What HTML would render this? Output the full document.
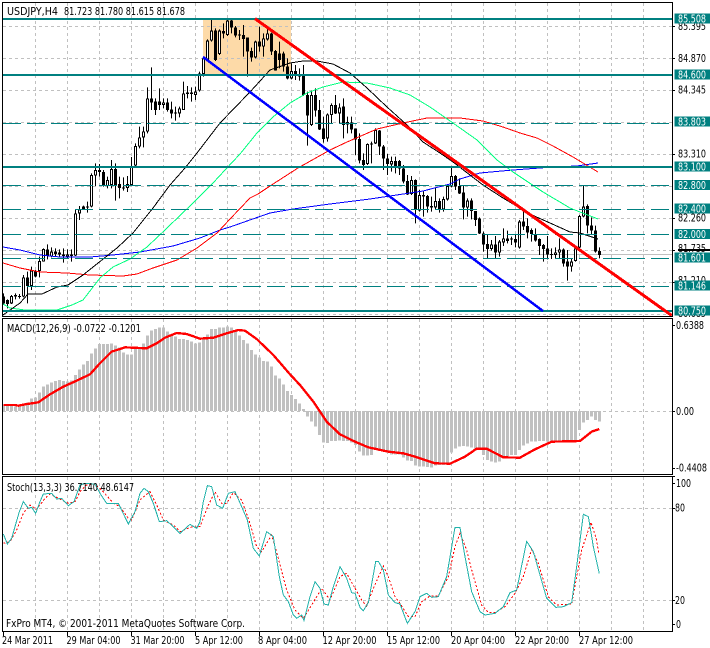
<!DOCTYPE html>
<html><head><meta charset="utf-8"><title>USDJPY,H4</title>
<style>html,body{margin:0;padding:0;background:#fff;width:710px;height:648px;overflow:hidden}svg{display:block}text{font-family:"DejaVu Sans","Liberation Sans",sans-serif;font-size:10.5px;fill:#000}.w{fill:#fff}polyline,line{shape-rendering:crispEdges}</style></head>
<body>
<svg width="710" height="648" viewBox="0 0 710 648" xmlns="http://www.w3.org/2000/svg">
<rect width="710" height="648" fill="#fff"/>
<!-- rectangle -->
<rect x="203" y="20" width="88" height="54" fill="#fddaa8"/>
<!-- grid -->
<g stroke="#c0c0c0" stroke-width="1" stroke-dasharray="3 3" fill="none" shape-rendering="crispEdges">
<path d="M3 26.5H672M3 58.5H672M3 90.5H672M3 122.5H672M3 154.5H672M3 186.5H672M3 218.5H672M3 250.5H672M3 282.5H672M3 314.5H672"/>
<path d="M35.5 3V316M67.5 3V316M99.5 3V316M131.5 3V316M163.5 3V316M195.5 3V316M227.5 3V316M259.5 3V316M291.5 3V316M323.5 3V316M355.5 3V316M387.5 3V316M419.5 3V316M451.5 3V316M483.5 3V316M515.5 3V316M547.5 3V316M579.5 3V316M611.5 3V316M643.5 3V316"/>
<path d="M35.5 319V474M67.5 319V474M99.5 319V474M131.5 319V474M163.5 319V474M195.5 319V474M227.5 319V474M259.5 319V474M291.5 319V474M323.5 319V474M355.5 319V474M387.5 319V474M419.5 319V474M451.5 319V474M483.5 319V474M515.5 319V474M547.5 319V474M579.5 319V474M611.5 319V474M643.5 319V474"/>
<path d="M3 411.5H672"/>
<path d="M35.5 477V631M67.5 477V631M99.5 477V631M131.5 477V631M163.5 477V631M195.5 477V631M227.5 477V631M259.5 477V631M291.5 477V631M323.5 477V631M355.5 477V631M387.5 477V631M419.5 477V631M451.5 477V631M483.5 477V631M515.5 477V631M547.5 477V631M579.5 477V631M611.5 477V631M643.5 477V631"/>
<path d="M3 508.5H672M3 600.5H672"/>
</g>
<!-- current price line -->
<path d="M3 254.5H672" stroke="#c0c0c0" stroke-width="1" shape-rendering="crispEdges"/>
<!-- candles -->
<g fill="none" shape-rendering="crispEdges">
<g transform="translate(0,160) scale(1,.33333)">
<path stroke="#000" stroke-width="1" d="M3.5 400V435M7.5 418V445M11.5 405V432M15.5 400V418M19.5 402V416M23.5 345V412M27.5 335V430M31.5 320V390M35.5 330V352M39.5 290V352M43.5 265V305M47.5 253V298M51.5 262V292M55.5 265V290M59.5 268V292M63.5 265V308M67.5 268V297M71.5 268V305M75.5 150V288M79.5 138V180M83.5 137V150M87.5 125V158M91.5 40V142M95.5 10V78M99.5 12V50M103.5 30V80M107.5 50V85M111.5 0V85M115.5 10V122M119.5 50V115M123.5 52V92M127.5 48V96M131.5 -9V75"/>
<path stroke="#000" stroke-width="3" d="M3.5 410V430M7.5 420V432M11.5 408V430M15.5 405V410M19.5 408V411M23.5 352V410M27.5 352V378M31.5 332V378M35.5 335V350M39.5 303V333M43.5 267V305M47.5 268V287M51.5 275V290M55.5 275V282M59.5 277V283M63.5 283V288M67.5 283V290M71.5 283V288M75.5 160V287M79.5 148V160M83.5 140V148M87.5 140V143M91.5 45V140M95.5 30V47M99.5 30V36M103.5 36V75M107.5 60V78M111.5 27V75M115.5 27V75M119.5 72V84M123.5 82V85M127.5 72V84M131.5 20V75"/>
<path stroke="#fff" stroke-width="1" d="M11.5 411V427M23.5 355V407M31.5 335V375M39.5 306V330M43.5 270V302M51.5 278V287M67.5 286V287M75.5 163V284M79.5 151V157M91.5 48V137M95.5 33V44M107.5 63V75M111.5 30V72M127.5 75V81M131.5 23V72"/>
</g>
<g>
<g transform="scale(1,.33333)">
<path stroke="#000" stroke-width="1" d="M135.5 430V500M139.5 380V445M143.5 380V442M147.5 262V400M151.5 202V330M155.5 295V345M159.5 265V330M163.5 295V325M167.5 295V335M171.5 305V355M175.5 320V362M179.5 320V352M183.5 245V330M187.5 258V295M191.5 262V305M195.5 260V300M199.5 215V275M203.5 170V230M207.5 118V180M211.5 55V125M215.5 85V183M219.5 88V165M223.5 70V115M227.5 55V108M231.5 55V100M235.5 78V112M239.5 90V120M243.5 75V170M247.5 113V230M251.5 143V185M255.5 122V175M259.5 80V155M263.5 100V170M267.5 80V122M271.5 98V165M275.5 150V212M279.5 125V205M283.5 155V215M287.5 175V238M291.5 190V238M295.5 195V240M299.5 205V242M303.5 195V288M307.5 275V437M311.5 272V378M315.5 265V350M319.5 300V390M323.5 350V428M327.5 340V425M331.5 310V370M335.5 285V342M339.5 310V372M343.5 295V415M347.5 350V400M351.5 350V400M355.5 385V465M359.5 400V490M363.5 460V510M367.5 430V495M371.5 425V490M375.5 385V432M379.5 390V465M383.5 435V510M387.5 462V525"/>
<path stroke="#000" stroke-width="3" d="M135.5 438V497M139.5 412V440M143.5 394V412M147.5 295V395M151.5 295V308M155.5 305V330M159.5 305V315M163.5 307V315M167.5 307V330M171.5 328V340M175.5 337V340M179.5 325V340M183.5 280V330M187.5 278V282M191.5 278V282M195.5 275V285M199.5 220V272M203.5 175V222M207.5 122V178M211.5 92V122M215.5 92V180M219.5 92V162M223.5 93V100M227.5 62V105M231.5 62V82M235.5 82V107M239.5 103V106M243.5 105V117M247.5 113V155M251.5 153V172M255.5 125V172M259.5 125V140M263.5 115V140M267.5 100V118M271.5 100V155M275.5 153V212M279.5 160V180M283.5 160V200M287.5 200V236M291.5 213V235M295.5 213V228M299.5 222V230M303.5 226V285M307.5 285V347M311.5 285V375M315.5 285V332M319.5 330V388M323.5 385V417M327.5 343V415M331.5 315V345M335.5 315V340M339.5 322V340M343.5 320V375M347.5 366V373M351.5 367V388M355.5 385V418M359.5 417V482M363.5 480V495M367.5 432V492M371.5 430V433M375.5 390V430M379.5 392V440M383.5 440V475M387.5 475V492"/>
<path stroke="#fff" stroke-width="1" d="M135.5 441V494M139.5 415V437M143.5 397V409M147.5 298V392M163.5 310V312M179.5 328V337M183.5 283V327M195.5 278V282M199.5 223V269M203.5 178V219M207.5 125V175M211.5 95V119M219.5 95V159M227.5 65V102M255.5 128V169M263.5 118V137M267.5 103V115M291.5 216V232M311.5 288V372M327.5 346V412M331.5 318V342M339.5 325V337M347.5 369V370M367.5 435V489M375.5 393V427"/>
</g>
</g>
<g transform="translate(0,100) scale(1,.33333)">
<path stroke="#000" stroke-width="1" d="M391.5 170V215M395.5 170V220M399.5 180V225M403.5 195V250M407.5 225V285M411.5 228V285M415.5 238V370M419.5 270V335M423.5 272V350M427.5 285V338M431.5 290V335M435.5 262V330M439.5 295V338M443.5 290V335M447.5 255V302M451.5 200V262M455.5 225V270M459.5 235V282"/>
<path stroke="#000" stroke-width="3" d="M391.5 183V193M395.5 183V200M399.5 183V205M403.5 205V245M407.5 243V283M411.5 240V282M415.5 240V330M419.5 285V332M423.5 285V290M427.5 288V320M431.5 318V322M435.5 303V322M439.5 303V328M443.5 297V328M447.5 258V298M451.5 228V260M455.5 228V260M459.5 258V280"/>
<path stroke="#fff" stroke-width="1" d="M391.5 186V190M411.5 243V279M419.5 288V329M435.5 306V319M443.5 300V325M447.5 261V295M451.5 231V257"/>
</g>
<g transform="translate(0,160) scale(1,.33333)">
<path stroke="#000" stroke-width="1" d="M463.5 75V178M467.5 115V170M471.5 115V178M475.5 153V198M479.5 172V222M483.5 215V275M487.5 225V295M491.5 240V272M495.5 228V295M499.5 240V290M503.5 205V258M507.5 212V250M511.5 230V255M515.5 225V262M519.5 180V266M523.5 145V210M527.5 175V235M531.5 205V245M535.5 205V245M539.5 235V285M543.5 252V305M547.5 228V298M551.5 265V297M555.5 262V295M559.5 235V295M563.5 265V320M567.5 270V362M571.5 295V335M575.5 258V305M579.5 165V265M583.5 75V172M587.5 133V220M591.5 172V222M595.5 197V278M599.5 262V295"/>
<path stroke="#000" stroke-width="3" d="M463.5 97V142M467.5 122V143M471.5 122V153M475.5 153V180M479.5 175V220M483.5 220V253M487.5 252V267M491.5 253V267M495.5 253V278M499.5 245V278M503.5 235V247M507.5 235V243M511.5 235V238M515.5 237V248M519.5 185V263M523.5 185V200M527.5 198V218M531.5 210V222M535.5 222V242M539.5 237V258M543.5 255V267M547.5 265V283M551.5 282V285M555.5 277V285M559.5 268V278M563.5 268V310M567.5 305V320M571.5 305V320M575.5 265V303M579.5 168V263M583.5 140V170M587.5 138V197M591.5 197V212M595.5 212V275M599.5 273V285"/>
<path stroke="#fff" stroke-width="1" d="M467.5 125V140M491.5 256V264M499.5 248V275M503.5 238V244M519.5 188V260M555.5 280V282M559.5 271V275M571.5 308V317M575.5 268V300M579.5 171V260M583.5 143V167"/>
</g>
</g>
<!-- moving averages -->
<g fill="none" stroke-width="1">
<polyline stroke="#0000ff" points="3,247 20,250 40,255 60,257 90,257 113,255 140,252 173,246 200,238 220,230 230,227 247,221 270,213 293,209 330,204 370,199 390,196 423,191 450,184 460,179 480,173 513,170 553,167 577,166 598,163"/>
<polyline stroke="#ff0000" points="3,263 20,268 40,272 67,273 90,275 123,276 137,274 153,268 177,260 197,248 217,233 230,219 250,198 258,194 270,186 298,168 330,150 347,142 377,129 403,123 427,118 460,118 483,121 503,127 520,133 537,138 553,146 573,157 598,172"/>
<polyline stroke="#00ff7f" points="3,304 10,308 25,310 57,310 72,305 83,300 100,278 113,267 130,259 147,247 167,228 193,203 213,183 225,170 240,154 257,133 273,117 290,103 307,93 323,87 343,82 367,83 390,88 410,95 430,107 453,123 477,140 497,160 513,172 543,192 570,208 580,212 598,219"/>
<polyline stroke="#000" points="3,315 20,303 28,294 42,294 57,287 68,285 83,275 117,248 133,233 153,208 170,185 185,168 197,153 220,123 250,92 270,70 290,63 303,61 317,61 333,64 350,73 367,88 387,107 407,125 423,142 440,153 453,162 483,185 503,198 523,210 532,215 550,223 570,232 580,233 598,239"/>
</g>
<!-- horizontal objects -->
<g stroke="#008080" fill="none" shape-rendering="crispEdges">
<path stroke-width="2" d="M3 19H672M3 75H672M3 167H672M3 311H672"/>
<path stroke-width="1" stroke-dasharray="18 6" d="M3 123.5H672M3 185.5H672M3 209.5H672M3 234.5H672M3 258.5H672M3 286.5H672"/>
</g>
<!-- trend lines -->
<line x1="203" y1="57" x2="543" y2="311" stroke="#0000ff" stroke-width="2.5"/>
<line x1="255" y1="18.7" x2="671.7" y2="315.5" stroke="#ff0000" stroke-width="3"/>
<!-- MACD bars -->
<g transform="translate(0,315) scale(1,.33333)" fill="none" stroke="#c0c0c0" stroke-width="3" shape-rendering="crispEdges">
<path d="M3.5 272V288M7.5 272V288M11.5 272V288M15.5 275V288M19.5 272V288M23.5 270V288M27.5 262V288M31.5 250V288M35.5 248V288M39.5 232V288M43.5 215V288M47.5 208V288M51.5 203V288M55.5 198V288M59.5 195V288M63.5 198V288M67.5 200V288M71.5 197V288M75.5 180V288M79.5 163V288M83.5 148V288M87.5 138V288M91.5 115V288M95.5 100V288M99.5 87V288M103.5 87V288M107.5 87V288M111.5 85V288M115.5 92V288M119.5 98V288M123.5 112V288M127.5 118V288M131.5 118V288M135.5 100V288M139.5 100V288M143.5 85V288M147.5 62V288M151.5 47V288M155.5 42V288M159.5 38V288M163.5 38V288M167.5 50V288M171.5 60V288M175.5 65V288M179.5 72V288M183.5 72V288M187.5 75V288M191.5 80V288M195.5 85V288M199.5 82V288M203.5 72V288M207.5 58V288M211.5 42V288M215.5 42V288M219.5 38V288M223.5 38V288M227.5 35V288M231.5 38V288M235.5 50V288M239.5 62V288M243.5 75V288M247.5 85V288M251.5 105V288M255.5 118V288M259.5 128V288M263.5 138V288M267.5 140V288M271.5 155V288M275.5 182V288M279.5 190V288M283.5 208V288M287.5 228V288M291.5 240V288M295.5 252V288M299.5 265V288M303.5 282V288"/>
<path d="M307.5 288V305M311.5 288V320M315.5 288V335M319.5 288V360M323.5 288V382M327.5 288V384M331.5 288V378M335.5 288V378M339.5 288V376M343.5 288V378M347.5 288V378M351.5 288V382M355.5 288V390M359.5 288V410M363.5 288V422M367.5 288V422M371.5 288V420M375.5 288V405M379.5 288V408M383.5 288V408M387.5 288V412M391.5 288V418M395.5 288V418M399.5 288V418M403.5 288V428M407.5 288V436M411.5 288V438M415.5 288V452M419.5 288V454M423.5 288V454M427.5 288V456M431.5 288V458M435.5 288V452M439.5 288V450M443.5 288V450M447.5 288V445M451.5 288V412M455.5 288V400M459.5 288V395M463.5 288V393M467.5 288V395M471.5 288V398M475.5 288V400M479.5 288V400M483.5 288V420M487.5 288V435M491.5 288V440M495.5 288V442M499.5 288V440M503.5 288V430M507.5 288V425M511.5 288V420M515.5 288V420M519.5 288V405M523.5 288V392M527.5 288V385M531.5 288V380M535.5 288V380M539.5 288V378M543.5 288V378M547.5 288V380M551.5 288V378M555.5 288V376M559.5 288V376M563.5 288V378M567.5 288V380M571.5 288V382M575.5 288V380M579.5 288V345M583.5 288V322M587.5 288V315M591.5 288V305M595.5 288V315M599.5 288V320"/>
</g>
<!-- MACD signal -->
<g fill="none" stroke="#ff0000" stroke-width="7" stroke-linejoin="round">
<polyline transform="translate(0,315) scale(.33333)" points="10,270 45,270 55,272 75,268 115,262 150,238 190,215 230,197 270,178 295,150 335,110 375,97 440,100 470,85 495,68 530,54 560,57 600,71 640,68 680,55 715,45 735,47 770,72 820,120 870,178 900,210 940,260 980,320 1020,358 1065,380"/>
<polyline transform="translate(355,315) scale(.33333)" points="0,380 40,397 100,410 145,415 180,425 240,445 285,446 330,425 365,401 395,401 445,427 495,428 540,403 590,380 675,378 710,350 733,342"/>
</g>
<!-- Stochastic -->
<g fill="none" stroke="#ff0000" stroke-width="3" stroke-dasharray="6 6">
<polyline transform="translate(0,470) scale(.33333)" points="10,220 30,215 50,180 70,130 90,105 110,118 135,85 150,72 175,85 205,100 225,95 240,65 260,45 285,42 310,65 340,100 360,110 385,145 395,150 420,90 450,65 470,105 490,150 520,165 540,185 570,172 600,170 625,105 645,65 665,100 680,100 700,68 725,90 750,160 770,230 785,245 815,195 835,265 860,360 885,420 910,445 935,405 965,355 990,390 1020,320 1040,310 1065,355"/>
<polyline transform="translate(355,470) scale(.33333)" points="0,355 20,390 35,408 55,355 85,288 100,320 120,380 135,400 160,440 180,440 200,395 225,378 250,378 280,320 300,230 315,190 335,240 350,300 380,405 400,428 420,428 450,410 480,370 505,320 530,237 550,280 580,380 605,405 650,402 680,240 708,157 725,210 731,250"/>
</g>
<g fill="none" stroke="#20b2aa" stroke-width="3">
<polyline transform="translate(0,470) scale(.33333)" points="10,192 22,222 35,205 45,170 58,125 70,95 85,115 95,112 107,130 120,95 130,72 155,70 170,87 185,85 205,107 222,95 240,45 255,40 285,42 300,70 320,100 355,100 385,162 405,125 420,70 432,55 445,65 460,100 478,155 500,152 525,175 540,190 570,163 590,175 600,155 610,95 622,47 635,50 650,105 668,115 685,70 705,65 725,110 742,150 760,235 778,258 800,185 820,200 838,320 850,375 865,395 880,435 890,445 905,435 912,452 930,380 945,335 960,355 972,402 985,405 1000,350 1020,290 1040,325 1055,368 1065,370"/>
<polyline transform="translate(355,470) scale(.33333)" points="0,370 15,412 25,422 40,398 62,275 70,274 85,300 100,375 120,398 135,402 157,460 180,425 195,380 215,370 230,382 250,380 275,320 300,172 315,172 330,260 350,365 375,425 390,435 420,430 445,410 465,368 485,360 515,214 535,245 575,385 603,412 625,410 650,398 665,290 685,133 700,140 715,230 733,311"/>
</g>
<!-- frames and ticks -->
<g stroke="#000" stroke-width="1" fill="none" shape-rendering="crispEdges">
<path d="M2.5 2.5H672.5V316.5H2.5ZM2.5 318.5H672.5V474.5H2.5ZM2.5 476.5H672.5V631.5H2.5Z"/>
<path d="M672 26.5H675M672 58.5H675M672 90.5H675M672 154.5H675M672 218.5H675M672 250.5H675M672 282.5H675M672 325.5H675M672 411.5H675M672 468.5H675M672 476.5H675M672 483.5H675M672 508.5H675M672 600.5H675M672 624.5H675"/>
<path d="M3.5 631V636M67.5 631V636M131.5 631V636M195.5 631V636M259.5 631V636M323.5 631V636M387.5 631V636M451.5 631V636M515.5 631V636M579.5 631V636"/>
</g>
<!-- axis labels -->
<text x="678" y="30" textLength="28" lengthAdjust="spacingAndGlyphs">85.395</text>
<text x="678" y="62" textLength="28" lengthAdjust="spacingAndGlyphs">84.870</text>
<text x="678" y="93.5" textLength="28" lengthAdjust="spacingAndGlyphs">84.345</text>
<text x="678" y="157.5" textLength="28" lengthAdjust="spacingAndGlyphs">83.310</text>
<text x="678" y="221.5" textLength="28" lengthAdjust="spacingAndGlyphs">82.260</text>
<text x="678" y="252" textLength="28" lengthAdjust="spacingAndGlyphs">81.735</text>
<text x="678" y="284" textLength="28" lengthAdjust="spacingAndGlyphs">81.210</text>
<text x="678" y="317" textLength="28" lengthAdjust="spacingAndGlyphs">80.685</text>
<rect x="678" y="249" width="32" height="2" fill="#000"/>
<g fill="#008080" shape-rendering="crispEdges">
<rect x="674.5" y="13.5" width="36" height="10"/>
<rect x="674.5" y="69.5" width="36" height="10"/>
<rect x="674.5" y="116.5" width="36" height="10"/>
<rect x="674.5" y="161.5" width="36" height="10"/>
<rect x="674.5" y="180" width="36" height="10"/>
<rect x="674.5" y="203.5" width="36" height="10"/>
<rect x="674.5" y="229" width="36" height="10"/>
<rect x="674.5" y="252.5" width="36" height="10"/>
<rect x="674.5" y="280.5" width="36" height="10"/>
<rect x="674.5" y="305.5" width="36" height="10"/>
</g>
<text class="w" x="678" y="22.5" textLength="28" lengthAdjust="spacingAndGlyphs">85.508</text>
<text class="w" x="678" y="78.5" textLength="28" lengthAdjust="spacingAndGlyphs">84.600</text>
<text class="w" x="678" y="125.5" textLength="28" lengthAdjust="spacingAndGlyphs">83.803</text>
<text class="w" x="678" y="170.5" textLength="28" lengthAdjust="spacingAndGlyphs">83.100</text>
<text class="w" x="678" y="189" textLength="28" lengthAdjust="spacingAndGlyphs">82.800</text>
<text class="w" x="678" y="212.5" textLength="28" lengthAdjust="spacingAndGlyphs">82.400</text>
<text class="w" x="678" y="238" textLength="28" lengthAdjust="spacingAndGlyphs">82.000</text>
<text class="w" x="678" y="261.5" textLength="28" lengthAdjust="spacingAndGlyphs">81.601</text>
<text class="w" x="678" y="289.5" textLength="28" lengthAdjust="spacingAndGlyphs">81.146</text>
<text class="w" x="678" y="314.5" textLength="28" lengthAdjust="spacingAndGlyphs">80.750</text>
<text x="676" y="329" textLength="28" lengthAdjust="spacingAndGlyphs">0.6388</text>
<text x="676" y="415" textLength="18" lengthAdjust="spacingAndGlyphs">0.00</text>
<text x="676" y="471.5" textLength="31" lengthAdjust="spacingAndGlyphs">-0.4408</text>
<text x="676" y="487" textLength="15" lengthAdjust="spacingAndGlyphs">100</text>
<text x="675" y="511.5" textLength="10" lengthAdjust="spacingAndGlyphs">80</text>
<text x="675" y="604" textLength="10" lengthAdjust="spacingAndGlyphs">20</text>
<text x="676" y="628" textLength="5" lengthAdjust="spacingAndGlyphs">0</text>
<!-- headers -->
<text x="7" y="15" textLength="51" lengthAdjust="spacingAndGlyphs">USDJPY,H4</text>
<text x="64" y="15" textLength="121" lengthAdjust="spacingAndGlyphs">81.723 81.780 81.615 81.678</text>
<text x="7" y="332" textLength="134" lengthAdjust="spacingAndGlyphs">MACD(12,26,9) -0.0722 -0.1201</text>
<text x="7" y="491" textLength="127" lengthAdjust="spacingAndGlyphs">Stoch(13,3,3) 36.7140 48.6147</text>
<text x="6" y="627" textLength="239" lengthAdjust="spacingAndGlyphs">FxPro MT4, © 2001-2011 MetaQuotes Software Corp.</text>
<!-- time axis -->
<text x="2" y="644" textLength="51" lengthAdjust="spacingAndGlyphs">24 Mar 2011</text>
<text x="66.5" y="644" textLength="54" lengthAdjust="spacingAndGlyphs">29 Mar 04:00</text>
<text x="130.5" y="644" textLength="54" lengthAdjust="spacingAndGlyphs">31 Mar 20:00</text>
<text x="195" y="644" textLength="48" lengthAdjust="spacingAndGlyphs">5 Apr 12:00</text>
<text x="258" y="644" textLength="49" lengthAdjust="spacingAndGlyphs">8 Apr 04:00</text>
<text x="322.5" y="644" textLength="54" lengthAdjust="spacingAndGlyphs">12 Apr 20:00</text>
<text x="387" y="644" textLength="53" lengthAdjust="spacingAndGlyphs">15 Apr 12:00</text>
<text x="451" y="644" textLength="54" lengthAdjust="spacingAndGlyphs">20 Apr 04:00</text>
<text x="515" y="644" textLength="54" lengthAdjust="spacingAndGlyphs">22 Apr 20:00</text>
<text x="579" y="644" textLength="54" lengthAdjust="spacingAndGlyphs">27 Apr 12:00</text>
</svg>
</body></html>
